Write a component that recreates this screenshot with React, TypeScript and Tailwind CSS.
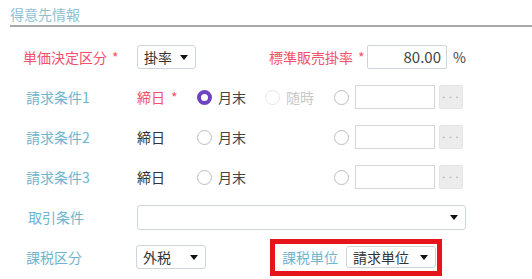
import React from 'react';

const Caret = () => (
  <svg width="8" height="5" viewBox="0 0 8 5" className="shrink-0">
    <path d="M0 0 L8 0 L4 5 Z" fill="#111" />
  </svg>
);

const Select: React.FC<{ value: string; className: string }> = ({ value, className }) => (
  <div
    className={`flex items-center justify-between border border-[#cfd4da] rounded-[3px] bg-white pl-[6px] pr-[7px] text-[14px] text-[#333] ${className}`}
  >
    <span>{value}</span>
    <Caret />
  </div>
);

const Radio: React.FC<{ checked?: boolean; disabled?: boolean }> = ({ checked, disabled }) => {
  if (checked) {
    return <span className="block w-[15px] h-[15px] rounded-full border-[4px] border-[#6f42c1] bg-white shrink-0" />;
  }
  return (
    <span
      className={`block w-[15px] h-[15px] rounded-full border-[1.5px] bg-white shrink-0 ${
        disabled ? 'border-[#e6e6e6]' : 'border-[#bdbdbd]'
      }`}
    />
  );
};

const LookupField = () => (
  <div className="flex items-center">
    <Radio />
    <div className="ml-[6px] w-[80px] h-[24px] border border-[#d6d6d6] bg-white" />
    <div className="ml-[4px] w-[24px] h-[24px] bg-[#ececec] border border-[#e4e4e4] rounded-[2px] flex items-center justify-center text-[10px] text-[#aaa] leading-none tracking-[1px]">
      ···
    </div>
  </div>
);

const ConditionRow: React.FC<{ label: string; first?: boolean }> = ({ label, first }) => (
  <div className="flex items-center h-[40px] pl-[26px]">
    <div className="w-[111px] shrink-0 text-[14px] text-[#6eb5cf]">{label}</div>
    <div className={`w-[60px] shrink-0 text-[14px] ${first ? 'text-[#f4506a]' : 'text-[#333]'}`}>
      締日{first && <span className="ml-[6px]">*</span>}
    </div>
    <div className="w-[68px] shrink-0 flex items-center">
      <Radio checked={first} />
      <span className="ml-[6px] text-[14px] text-[#444]">月末</span>
    </div>
    <div className="w-[69px] shrink-0 flex items-center">
      {first && (
        <>
          <Radio disabled />
          <span className="ml-[6px] text-[14px] text-[#c8c8c8]">随時</span>
        </>
      )}
    </div>
    <LookupField />
  </div>
);

export default function App() {
  return (
    <div
      className="w-[532px] h-[279px] bg-white overflow-hidden"
      style={{ fontFamily: '"Noto Sans CJK JP", "Noto Sans", sans-serif' }}
    >
      <div className="ml-[10px] pt-[4px] border-b-2 border-[#a8a8a8] h-[27px]">
        <div className="text-[14px] leading-[20px] text-[#8fbfd3]">得意先情報</div>
      </div>

      <div className="mt-[10px]">
        {/* 単価決定区分 */}
        <div className="flex items-center h-[40px] pl-[23px]">
          <div className="w-[114px] shrink-0 text-[14px] text-[#f4506a]">
            単価決定区分<span className="ml-[5px]">*</span>
          </div>
          <Select value="掛率" className="w-[59px] h-[24px]" />
          <div className="ml-[73px] text-[14px] text-[#f4506a] w-[98px] shrink-0">
            標準販売掛率<span className="ml-[5px]">*</span>
          </div>
          <div className="w-[80px] h-[24px] border border-[#cfd4da] rounded-[2px] flex items-center justify-end pr-[5px] text-[15px] text-[#444]">
            80.00
          </div>
          <span className="ml-[6px] text-[14px] text-[#444]">%</span>
        </div>

        <ConditionRow label="請求条件1" first />
        <ConditionRow label="請求条件2" />
        <ConditionRow label="請求条件3" />

        {/* 取引条件 */}
        <div className="flex items-center h-[40px] pl-[28px]">
          <div className="w-[109px] shrink-0 text-[14px] text-[#6eb5cf]">取引条件</div>
          <Select value="" className="w-[329px] h-[25px]" />
        </div>

        {/* 課税区分 / 課税単位 */}
        <div className="flex items-center h-[40px] pl-[26px]">
          <div className="w-[110px] shrink-0 text-[14px] text-[#6eb5cf]">課税区分</div>
          <Select value="外税" className="w-[70px] h-[24px]" />
          <div className="ml-[64px] w-[172px] h-[37px] border-[5px] border-[#e8141c] flex items-center pl-[7px]">
            <span className="text-[14px] text-[#6eb5cf] w-[64px] shrink-0 whitespace-nowrap">課税単位</span>
            <Select value="請求単位" className="w-[90px] h-[22px]" />
          </div>
        </div>
      </div>
    </div>
  );
}
